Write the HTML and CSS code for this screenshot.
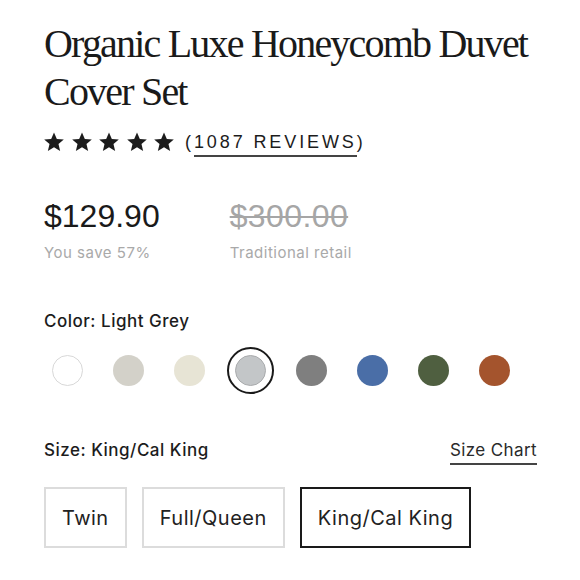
FILE: index.html
```html
<!DOCTYPE html>
<html lang="en">
<head>
<meta charset="utf-8">
<title>Organic Luxe Honeycomb Duvet Cover Set</title>
<link rel="stylesheet" href="styles.css">
</head>
<body>
<main class="product">
  <h1 class="title">Organic Luxe Honeycomb Duvet Cover Set</h1>
  <div class="rating">
    <div class="stars">
      <svg class="star" viewBox="0 0 24 24"><path d="M12 1.5l3.1 7.1 7.6.6-5.8 5 1.8 7.5L12 17.7l-6.7 4 1.8-7.5-5.8-5 7.6-.6z"/></svg>
      <svg class="star" viewBox="0 0 24 24"><path d="M12 1.5l3.1 7.1 7.6.6-5.8 5 1.8 7.5L12 17.7l-6.7 4 1.8-7.5-5.8-5 7.6-.6z"/></svg>
      <svg class="star" viewBox="0 0 24 24"><path d="M12 1.5l3.1 7.1 7.6.6-5.8 5 1.8 7.5L12 17.7l-6.7 4 1.8-7.5-5.8-5 7.6-.6z"/></svg>
      <svg class="star" viewBox="0 0 24 24"><path d="M12 1.5l3.1 7.1 7.6.6-5.8 5 1.8 7.5L12 17.7l-6.7 4 1.8-7.5-5.8-5 7.6-.6z"/></svg>
      <svg class="star" viewBox="0 0 24 24"><path d="M12 1.5l3.1 7.1 7.6.6-5.8 5 1.8 7.5L12 17.7l-6.7 4 1.8-7.5-5.8-5 7.6-.6z"/></svg>
    </div>
    <span class="reviews">(<span class="reviews-link">1087 REVIEWS</span>)</span>
  </div>

  <div class="prices">
    <div class="price-col">
      <div class="price">$129.90</div>
      <div class="price-note">You save 57%</div>
    </div>
    <div class="price-col">
      <div class="price price-old">$300.00</div>
      <div class="price-note">Traditional retail</div>
    </div>
  </div>

  <div class="label">Color: Light Grey</div>
  <div class="swatches">
    <span class="swatch"><span class="dot dot-white"></span></span>
    <span class="swatch"><span class="dot dot-stone"></span></span>
    <span class="swatch"><span class="dot dot-cream"></span></span>
    <span class="swatch is-selected"><span class="dot dot-lightgrey"></span></span>
    <span class="swatch"><span class="dot dot-grey"></span></span>
    <span class="swatch"><span class="dot dot-blue"></span></span>
    <span class="swatch"><span class="dot dot-green"></span></span>
    <span class="swatch"><span class="dot dot-rust"></span></span>
  </div>

  <div class="size-head">
    <div class="label label-size">Size: King/Cal King</div>
    <span class="size-chart">Size Chart</span>
  </div>
  <div class="sizes">
    <span class="size-btn">Twin</span>
    <span class="size-btn">Full/Queen</span>
    <span class="size-btn is-selected">King/Cal King</span>
  </div>
</main>
</body>
</html>
```

FILE: styles.css
```css
* { box-sizing: border-box; }

body {
  margin: 0;
  background: #fff;
  color: #1c1c1c;
  font-family: Inter, "Liberation Sans", sans-serif;
}

.product {
  padding: 20px 40px 0 44px;
}

.title {
  margin: 0;
  font-family: "Liberation Serif", serif;
  font-weight: 400;
  font-size: 40px;
  line-height: 48px;
  letter-spacing: -1.8px;
  color: #1a1a1a;
}

.rating {
  display: flex;
  align-items: center;
  margin-top: 14px;
  height: 24px;
}

.stars {
  display: flex;
  gap: 5.5px;
  margin-left: -1px;
}

.star {
  width: 22px;
  height: 22px;
  fill: #1c1c1c;
}

.reviews {
  margin-left: 10px;
  font-family: "Liberation Sans", sans-serif;
  font-size: 18px;
  letter-spacing: 2.9px;
  color: #1c1c1c;
  line-height: 24px;
}

.reviews-link {
  border-bottom: 2px solid #444;
  padding-bottom: 3px;
}

.prices {
  display: flex;
  gap: 70px;
  margin-top: 43px;
}

.price-col {
  display: flex;
  flex-direction: column;
  gap: 8px;
}

.price {
  font-family: "Liberation Sans", sans-serif;
  font-size: 32px;
  line-height: 38px;
  color: #1a1a1a;
}

.price-old {
  color: #a6a6a6;
  text-decoration: line-through;
  text-decoration-thickness: 2px;
  letter-spacing: 0.4px;
}

.price-note {
  font-size: 15px;
  line-height: 20px;
  letter-spacing: 0.5px;
  color: #a9a9a9;
}

.label {
  margin-top: 47px;
  font-size: 17px;
  line-height: 22px;
  font-weight: 500;
  letter-spacing: 0.5px;
  color: #1c1c1c;
}

.swatches {
  display: flex;
  gap: 14px;
  margin-top: 15px;
}

.swatch {
  width: 47px;
  height: 47px;
  border-radius: 50%;
  display: flex;
  align-items: center;
  justify-content: center;
  border: 2px solid transparent;
}

.swatch.is-selected {
  border-color: #1a1a1a;
}

.dot {
  width: 31px;
  height: 31px;
  border-radius: 50%;
}

.dot-white { background: #fff; border: 1px solid #d8d8d8; }
.dot-stone { background: #d3d1c9; }
.dot-cream { background: #e7e4d5; }
.dot-lightgrey { background: #c3c6c8; border: 1px solid #a9abad; }
.dot-grey { background: #7f7f7f; }
.dot-blue { background: #4a6ea7; }
.dot-green { background: #4f5f40; }
.dot-rust { background: #a4542d; }

.size-head {
  display: flex;
  justify-content: space-between;
  align-items: baseline;
  margin-top: 45px;
  margin-right: 3px;
}

.label-size {
  margin-top: 0;
}

.size-chart {
  font-size: 17px;
  line-height: 22px;
  letter-spacing: 0.4px;
  color: #2a2a2a;
  border-bottom: 2px solid #444;
  padding-bottom: 2px;
}

.sizes {
  display: flex;
  gap: 15px;
  margin-top: 22px;
}

.size-btn {
  height: 61px;
  padding: 0 16px;
  display: flex;
  align-items: center;
  border: 2px solid #dcdcdc;
  font-size: 20px;
  letter-spacing: 0.5px;
  color: #222;
}

.size-btn.is-selected {
  border-color: #1a1a1a;
}
```
